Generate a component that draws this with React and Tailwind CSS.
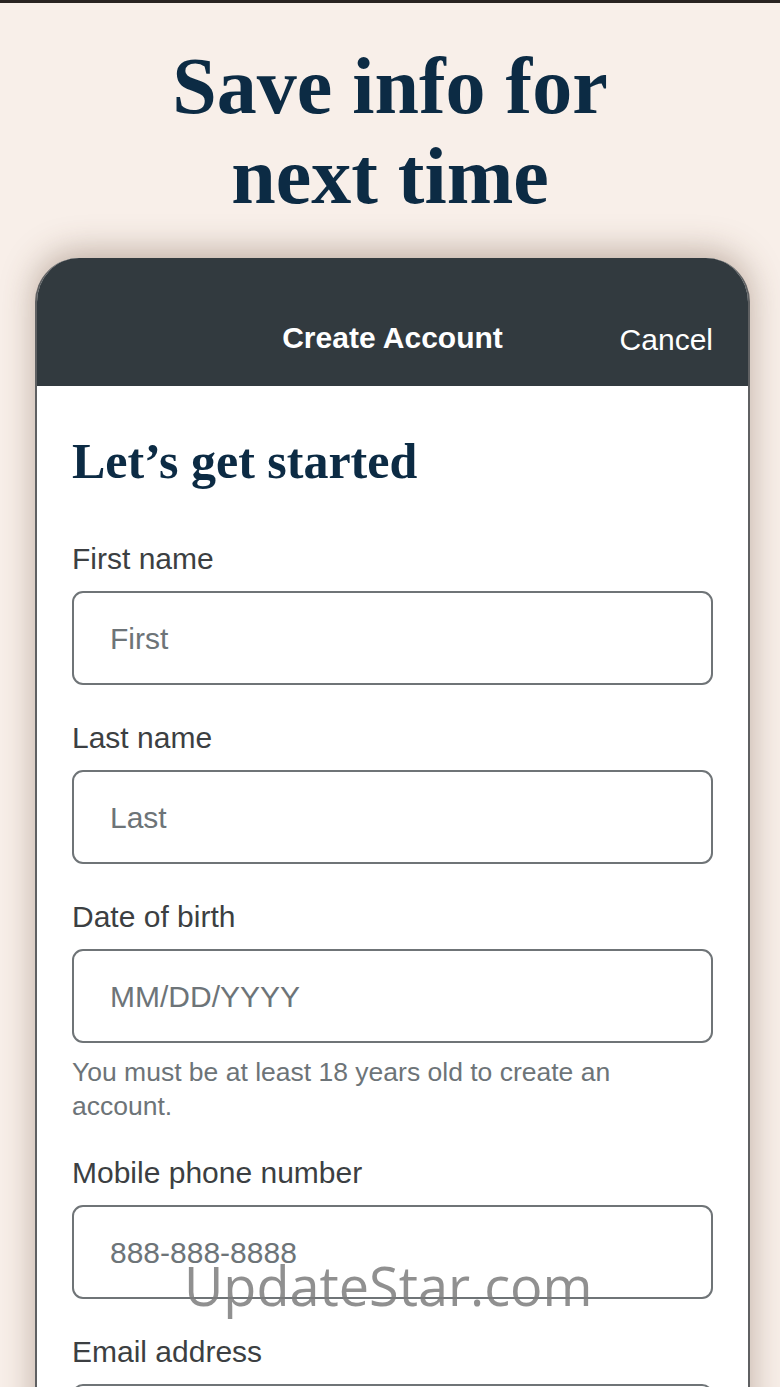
import React from "react";

function Field({ label, placeholder, children, labelTop = "mt-[35px]" }) {
  return (
    <div className={labelTop}>
      <div className="text-[30px] leading-[36px] text-[#3c3f42]">{label}</div>
      <div className="mt-[14px] h-[94px] rounded-[11px] border-2 border-[#6f7477] flex items-center pl-[36px]">
        <span className="text-[30px] text-[#6d7478]">{placeholder}</span>
      </div>
      {children}
    </div>
  );
}

export default function App() {
  return (
    <div
      className="relative w-[780px] h-[1387px] overflow-hidden bg-[#f8efe9] border-t-[3px] border-[#2a2421]"
      style={{ fontFamily: '"Liberation Sans", Arial, sans-serif' }}
    >
      <h1
        className="mt-[38px] text-center text-[80px] leading-[90px] font-bold text-[#0c2b44]"
        style={{ fontFamily: '"Liberation Serif", "Times New Roman", serif' }}
      >
        Save info for
        <br />
        next time
      </h1>

      <div className="mt-[37px] ml-[35px] mr-[30px] h-[1200px] rounded-t-[44px] border-x-2 border-[#5f6062] bg-white overflow-hidden shadow-[0_-6px_34px_rgba(95,65,45,0.38)]">
        <div className="h-[128px] bg-[#323a3f] relative">
          <div className="w-full text-center text-white font-bold text-[30px] leading-[36px] pt-[62px]">
            Create Account
          </div>
          <div className="absolute right-[35px] top-[64px] text-white text-[30px] leading-[36px]">
            Cancel
          </div>
        </div>

        <div className="pl-[35px] pr-[35px] pt-[50px]">
          <h2
            className="text-[50px] leading-[50px] font-bold text-[#0c2b44]"
            style={{ fontFamily: '"Liberation Serif", "Times New Roman", serif' }}
          >
            Let’s get started
          </h2>

          <Field label="First name" placeholder="First" labelTop="mt-[55px]" />
          <Field label="Last name" placeholder="Last" />
          <Field label="Date of birth" placeholder="MM/DD/YYYY">
            <p className="mt-[12px] text-[26.5px] leading-[34px] text-[#6d7478] pr-[60px]">
              You must be at least 18 years old to create an account.
            </p>
          </Field>
          <Field label="Mobile phone number" placeholder="888-888-8888" labelTop="mt-[32px]" />
          <Field label="Email address" placeholder="" />
        </div>
      </div>

      <div
        className="absolute left-[184px] top-[1247px] text-[54px] leading-[70px] text-[#7d7d7d]/85 pointer-events-none"
        style={{ fontFamily: '"Open Sans", sans-serif' }}
      >
        UpdateStar.com
      </div>
    </div>
  );
}
